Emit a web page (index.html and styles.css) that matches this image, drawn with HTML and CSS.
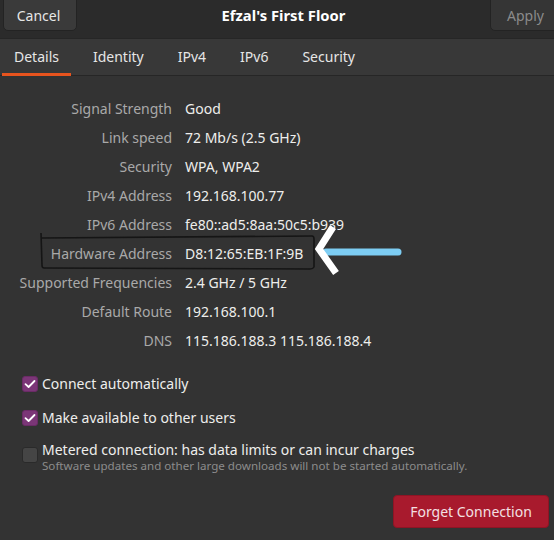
FILE: index.html
```html
<!DOCTYPE html>
<html>
<head>
<meta charset="utf-8">
<link rel="stylesheet" href="styles.css">
</head>
<body>
<div class="window">
  <header class="headerbar">
    <button class="hbtn cancel">Cancel</button>
    <div class="title">Efzal's First Floor</div>
    <button class="hbtn apply">Apply</button>
  </header>
  <nav class="tabs">
    <div class="tab active">Details</div>
    <div class="tab">Identity</div>
    <div class="tab">IPv4</div>
    <div class="tab">IPv6</div>
    <div class="tab">Security</div>
  </nav>
  <main class="content">
    <div class="details">
      <div class="label">Signal Strength</div><div class="value">Good</div>
      <div class="label">Link speed</div><div class="value">72 Mb/s (2.5 GHz)</div>
      <div class="label">Security</div><div class="value">WPA, WPA2</div>
      <div class="label">IPv4 Address</div><div class="value">192.168.100.77</div>
      <div class="label">IPv6 Address</div><div class="value">fe80::ad5:8aa:50c5:b939</div>
      <div class="label">Hardware Address</div><div class="value">D8:12:65:EB:1F:9B</div>
      <div class="label">Supported Frequencies</div><div class="value">2.4 GHz / 5 GHz</div>
      <div class="label">Default Route</div><div class="value">192.168.100.1</div>
      <div class="label">DNS</div><div class="value">115.186.188.3 115.186.188.4</div>
    </div>
    <div class="checks">
      <div class="check">
        <span class="box checked"><svg viewBox="0 0 16 16" width="16" height="16"><path d="M3.5 8.2 L6.6 11 L12.5 5" fill="none" stroke="#fff" stroke-width="1.8" stroke-linecap="round" stroke-linejoin="round"/></svg></span>
        <span class="clabel">Connect automatically</span>
      </div>
      <div class="check">
        <span class="box checked"><svg viewBox="0 0 16 16" width="16" height="16"><path d="M3.5 8.2 L6.6 11 L12.5 5" fill="none" stroke="#fff" stroke-width="1.8" stroke-linecap="round" stroke-linejoin="round"/></svg></span>
        <span class="clabel">Make available to other users</span>
      </div>
      <div class="check metered">
        <span class="box"></span>
        <div class="ctext">
          <span class="clabel">Metered connection: has data limits or can incur charges</span>
          <span class="csub">Software updates and other large downloads will not be started automatically.</span>
        </div>
      </div>
    </div>
    <div class="actions">
      <button class="forget">Forget Connection</button>
    </div>
    <svg class="annot" width="554" height="80" viewBox="0 0 554 80">
      <path d="M42 5 L312 3 Q314 3 314 6 L314 34 Q313 36 310 36 L44 35 Q42 35 42 32 L41 0" fill="none" stroke="#151515" stroke-width="1.6" stroke-linejoin="round"/>
      <line x1="326" y1="19" x2="398" y2="19" stroke="#7dcdf3" stroke-width="7" stroke-linecap="round"/>
      <path d="M333 -6 L319 16 L336 40" fill="none" stroke="#ffffff" stroke-width="7" stroke-linecap="butt" stroke-linejoin="miter"/>
    </svg>
  </main>
</div>
</body>
</html>
```
FILE: styles.css
```css
* { box-sizing: border-box; }
html, body { margin: 0; padding: 0; }
body {
  width: 554px;
  height: 540px;
  overflow: hidden;
  background: #333333;
  font-family: "Noto Sans", "Open Sans", sans-serif;
  font-size: 14px;
  color: #eeeeec;
}
.window { display: flex; flex-direction: column; height: 540px; }
.headerbar {
  height: 38px;
  background: #2b2b2b;
  display: flex;
  align-items: flex-start;
  justify-content: space-between;
  position: relative;
}
.hbtn {
  font-family: inherit;
  font-size: 14px;
  height: 32px;
  margin-top: -1px;
  border: 1px solid #232323;
  border-radius: 0 0 5px 5px;
  background: #3a3a3a;
  color: #e6e6e6;
  padding: 0 15px;
}
.cancel { margin-left: 3px; width: 74px; padding-left: 12px; }
.apply { margin-right: -8px; width: 72px; color: #8b8b8b; background: #353535; padding-right: 16px; }
.title {
  font-weight: bold;
  font-size: 14.8px;
  color: #ffffff;
  padding-top: 5px;
  padding-left: 0;
}
.tabs {
  height: 38px;
  background: #383838;
  border-top: 1px solid #262626;
  border-bottom: 1px solid #262626;
  display: flex;
  padding-left: 2px;
}
.tab {
  padding: 8px 12px 0;
  margin-right: 10px;
  color: #e6e6e6;
  height: 37px;
}
.tab.active { box-shadow: inset 0 -3px 0 #e8541e; padding: 8px 12px 0; }
.content { position: relative; flex: 1; }
.details {
  display: grid;
  grid-template-columns: 172px auto;
  column-gap: 13px;
  row-gap: 8px;
  padding-top: 22px;
  line-height: 21px;
}
.label { text-align: right; color: #a9a9a9; white-space: nowrap; }
.value { color: #eeeeec; white-space: nowrap; }
.checks { padding-left: 22px; margin-top: 22px; display: flex; flex-direction: column; gap: 13px; }
.check { display: flex; align-items: center; gap: 4px; height: 21px; }
.box {
  width: 16px; height: 16px; border-radius: 3px;
  background: #454545; border: 1px solid #2a2a2a;
  display: inline-flex;
  flex: none;
}
.box.checked { background: #7b3677; border-color: #6a2b66; }
.box.checked svg { margin: -1px; }
.metered { align-items: flex-start; height: auto; }
.metered .box { margin-top: 6px; }
.ctext { display: flex; flex-direction: column; }
.ctext .clabel { line-height: 18px; }
.csub { font-size: 11.6px; color: #8c8c8c; line-height: 14px; white-space: nowrap; }
.actions { display: flex; justify-content: flex-end; padding-right: 5px; margin-top: 22px; }
.forget {
  font-family: inherit; font-size: 14px;
  background: #a81a2d;
  color: #f3e0e3;
  border: 1px solid #8f1424;
  border-radius: 4px;
  width: 156px; height: 33px;
}
.annot { position: absolute; left: 0; top: 157px; overflow: visible; pointer-events: none; }
```
